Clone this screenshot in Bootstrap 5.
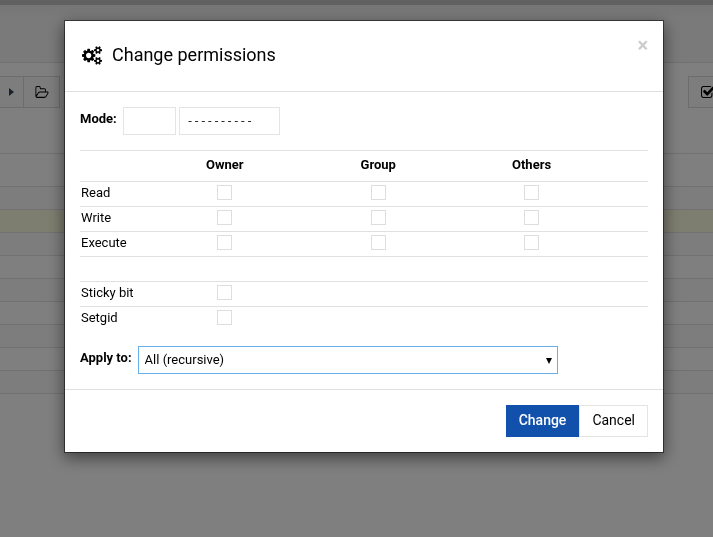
<!DOCTYPE html>
<html lang="en">
<head>
<meta charset="utf-8">
<meta name="viewport" content="width=device-width, initial-scale=1">
<title>Change permissions</title>
<link href="https://cdn.jsdelivr.net/npm/bootstrap@5.3.0/dist/css/bootstrap.min.css" rel="stylesheet">
<style>
body { font-family: Roboto, "Liberation Sans", sans-serif; font-size: 13px; line-height: 18px; color: #000; overflow: hidden; }
svg { display: block; fill: currentColor; }

/* File manager behind the dialog */
.app-strip { height: 5px; background: #c2c2c2; }
.app-head { height: 58px; background: linear-gradient(#ececec, #f4f4f4 12px); border-bottom: 1px solid #e2e2e2; }
.tool-row { padding: 13px 0 45px; }
.tool-btn { height: 32px; border: 1px solid #d8d8d8; border-radius: 0; background: #fafafa; color: #000; padding: 0 10px 0 11px; display: flex; align-items: center; }
.tool-crumb { width: 23px; border-left: 0; border-right: 0; padding: 0 9px; color: #345; }
.tool-check { width: 25px; border-right: 0; padding: 0 0 0 12px; overflow: hidden; }
.file-list { border-top: 1px solid #e2e2e2; }
.file-row { height: 23px; border-bottom: 1px solid #e2e2e2; }
.file-row.file-head { height: 33px; }
.file-row:nth-child(even) { background: #fbfbfb; }
.file-row.file-picked { background: #fafae0; }

/* Dialog */
.perm-modal { background: rgba(0, 0, 0, .5); padding-left: 15px; }
.perm-modal .modal-dialog { max-width: 600px; margin: 20px auto; }
.perm-modal .modal-content { border: 1px solid rgba(0, 0, 0, .5); border-radius: 0; background-clip: padding-box; box-shadow: 0 5px 15px rgba(0, 0, 0, .5); color: #000; }
.perm-modal .modal-header { padding: 15px; height: 71px; border-color: #e0e0e0; border-radius: 0; }
.perm-modal .modal-title { font-size: 18px; line-height: 24px; font-weight: 400; padding: 7px 0 0 2px; gap: 10px; }
.perm-close { border: 0; background: none; padding: 0; margin: 0; color: #ccc; font-size: 20px; line-height: 18px; font-weight: 700; }
.perm-modal .modal-body { padding: 15px; }
.perm-line { gap: 6px; }
.perm-pair { gap: 3px; }
.perm-label { font-weight: 700; margin: 0; line-height: 24px; }
.perm-modal .form-control, .perm-modal .form-select { font-size: 13px; line-height: 18px; height: 28px; padding: 4px 6px; border: 1px solid #e4e4e4; border-radius: 0; color: #000; }
.perm-modal .perm-octal { width: 53px; }
.perm-modal .perm-text { width: 101px; padding-left: 7px; font-family: "Liberation Mono", monospace; font-size: 11px; }
.perm-modal .form-select { width: 420px; border-color: #66afe9; background: #fff url("data:image/svg+xml,%3Csvg xmlns='http://www.w3.org/2000/svg' viewBox='0 0 6 6'%3E%3Cpath d='M0 0h6L3 6z'/%3E%3C/svg%3E") no-repeat right 5px top 11px / 6px 6px; }
.perm-table { width: 100%; table-layout: fixed; margin: 15px 0 14px; border-top: 1px solid #e0e0e0; }
.perm-table th, .perm-table td { height: 25px; padding: 0 1px 3px; border-bottom: 1px solid #e0e0e0; vertical-align: middle; text-align: center; line-height: 18px; }
.perm-table thead th { height: 31px; font-weight: 700; }
.perm-table tbody th { text-align: left; font-weight: 400; white-space: nowrap; }
.perm-table tbody tr:last-child > * { border-bottom: 0; }
.perm-modal .form-check-input { display: block; width: 15px; height: 15px; margin: 0 auto; padding: 0; border: 1px solid #dedede; border-radius: 0; float: none; }
.col-name { width: 12%; }
.col-who { width: 27%; }
.perm-modal .modal-footer { padding: 15px; border-color: #e0e0e0; border-radius: 0; }
.perm-modal .modal-footer > * { margin: 0; }
.perm-modal .btn { font-size: 14px; line-height: 20px; height: 32px; padding: 4px 12px 6px; border-radius: 0; border-color: #e4e4e4; color: #000; }
.perm-modal .btn-primary { background: #1150ab; border-color: #1150ab; color: #fff; font-weight: 500; }
</style>
</head>
<body>
<div aria-hidden="true">
  <div class="app-strip"></div>
  <div class="app-head"></div>
  <div class="tool-row d-flex justify-content-between">
    <div class="d-flex">
      <button class="tool-btn tool-crumb" type="button" tabindex="-1"><svg width="5" height="8" viewBox="0 0 5 8"><path d="M0 0l5 4-5 4z"/></svg></button>
      <button class="tool-btn" type="button" tabindex="-1"><svg width="14" height="13" viewBox="0 128 2048 1536" preserveAspectRatio="none"><path d="M1845 931q0-35-53-35h-1088q-40 0-85.5 21.5t-71.5 52.5l-294 363q-18 24-18 40 0 35 53 35h1088q40 0 86-22t71-53l294-363q18-22 18-39zm-1141-163h768v-160q0-40-28-68t-68-28h-576q-40 0-68-28t-28-68v-64q0-40-28-68t-68-28h-320q-40 0-68 28t-28 68v853l256-315q44-53 116-87.5t140-34.5zm1269 163q0 62-46 120l-295 363q-43 53-116 87.5t-140 34.5h-1088q-92 0-158-66t-66-158v-960q0-92 66-158t158-66h320q92 0 158 66t66 158v32h544q92 0 158 66t66 158v160h192q54 0 99 24.5t67 70.5q15 32 15 68z"/></svg></button>
    </div>
    <button class="tool-btn tool-check" type="button" tabindex="-1"><svg class="flex-shrink-0" width="13" height="12" viewBox="192 192 1600 1408" preserveAspectRatio="none"><path d="M1472 930v318q0 119-84.5 203.5t-203.5 84.5h-832q-119 0-203.5-84.5t-84.5-203.5v-832q0-119 84.5-203.5t203.5-84.5h832q63 0 117 25 15 7 18 23 3 17-9 29l-49 49q-10 10-23 10-3 0-9-2-23-6-45-6h-832q-66 0-113 47t-47 113v832q0 66 47 113t113 47h832q66 0 113-47t47-113v-254q0-13 9-22l64-64q10-10 23-10 6 0 12 3 20 8 20 29zm231-489l-814 814q-24 24-57 24t-57-24l-430-430q-24-24-24-57t24-57l110-110q24-24 57-24t57 24l263 263 647-647q24-24 57-24t57 24l110 110q24 24 24 57t-24 57z" transform="translate(128 64)"/></svg></button>
  </div>
  <div class="file-list">
    <div class="file-row file-head"></div>
    <div class="file-row"></div>
    <div class="file-row file-picked"></div>
    <div class="file-row"></div>
    <div class="file-row"></div>
    <div class="file-row"></div>
    <div class="file-row"></div>
    <div class="file-row"></div>
    <div class="file-row"></div>
    <div class="file-row"></div>
  </div>
</div>

<div class="modal perm-modal d-block" role="dialog" aria-modal="true" aria-labelledby="permTitle">
  <div class="modal-dialog">
    <form class="modal-content">
      <div class="modal-header align-items-start">
        <h4 class="modal-title d-flex align-items-center" id="permTitle">
          <svg width="20" height="19" viewBox="0 0 1920 1792"><path d="M896 896q0-106-75-181t-181-75-181 75-75 181 75 181 181 75 181-75 75-181zm768 512q0-52-38-90t-90-38-90 38-38 90q0 53 37.500 90.500t90.500 37.500 90.500-37.500 37.500-90.500zm0-1024q0-52-38-90t-90-38-90 38-38 90q0 53 37.500 90.500t90.500 37.500 90.500-37.500 37.500-90.500zm-384 421v185q0 10-7 19.500t-16 10.500l-155 24q-11 35-32 76 34 48 90 115 7 11 7 20 0 12-7 19-23 30-82.500 89.500t-78.500 59.500q-11 0-21-7l-115-90q-37 19-77 31-11 108-23 155-7 24-30 24h-186q-11 0-20-7.500t-10-17.500l-23-153q-34-10-75-31l-118 89q-7 7-20 7-11 0-21-8-144-133-144-160 0-9 7-19 10-14 41-53t47-61q-23-44-35-82l-152-24q-10-1-17-9.500t-7-19.500v-185q0-10 7-19.500t16-10.500l155-24q11-35 32-76-34-48-90-115-7-11-7-20 0-12 7-20 22-30 82-89t79-59q11 0 21 7l115 90q34-18 77-32 11-108 23-154 7-24 30-24h186q11 0 20 7.500t10 17.500l23 153q34 10 75 31l118-89q8-7 20-7 11 0 21 8 144 133 144 160 0 8-7 19-12 16-42 54t-45 60q23 48 34 82l152 23q10 2 17 10.500t7 19.500zm640 533v140q0 16-149 31-12 27-30 52 51 113 51 138 0 4-4 7-122 71-124 71-8 0-46-47t-52-68q-20 2-30 2t-30-2q-14 21-52 68t-46 47q-2 0-124-71-4-3-4-7 0-25 51-138-18-25-30-52-149-15-149-31v-140q0-16 149-31 13-29 30-52-51-113-51-138 0-4 4-7 4-2 35-20t59-34 30-16q8 0 46 46.500t52 67.500q20-2 30-2t30 2q51-71 92-112l6-2q4 0 124 70 4 3 4 7 0 25-51 138 17 23 30 52 149 15 149 31zm0-1024v140q0 16-149 31-12 27-30 52 51 113 51 138 0 4-4 7-122 71-124 71-8 0-46-47t-52-68q-20 2-30 2t-30-2q-14 21-52 68t-46 47q-2 0-124-71-4-3-4-7 0-25 51-138-18-25-30-52-149-15-149-31v-140q0-16 149-31 13-29 30-52-51-113-51-138 0-4 4-7 4-2 35-20t59-34 30-16q8 0 46 46.500t52 67.500q20-2 30-2t30 2q51-71 92-112l6-2q4 0 124 70 4 3 4 7 0 25-51 138 17 23 30 52 149 15 149 31z"/></svg>
          Change permissions
        </h4>
        <button class="perm-close ms-auto" type="button" aria-label="Close">×</button>
      </div>
      <div class="modal-body">
        <div class="perm-line d-flex">
          <label class="perm-label" for="octal">Mode:</label>
          <div class="perm-pair d-flex">
            <input class="form-control perm-octal" id="octal" type="text">
            <input class="form-control perm-text" id="symbolic" type="text" value="----------" aria-label="Symbolic mode">
          </div>
        </div>
        <table class="perm-table">
          <colgroup><col class="col-name"><col class="col-who"><col class="col-who"><col class="col-who"><col></colgroup>
          <thead>
            <tr><td></td><th scope="col">Owner</th><th scope="col">Group</th><th scope="col">Others</th><td></td></tr>
          </thead>
          <tbody>
            <tr><th scope="row">Read</th>
              <td><input class="form-check-input" type="checkbox" aria-label="Owner read"></td>
              <td><input class="form-check-input" type="checkbox" aria-label="Group read"></td>
              <td><input class="form-check-input" type="checkbox" aria-label="Others read"></td><td></td></tr>
            <tr><th scope="row">Write</th>
              <td><input class="form-check-input" type="checkbox" aria-label="Owner write"></td>
              <td><input class="form-check-input" type="checkbox" aria-label="Group write"></td>
              <td><input class="form-check-input" type="checkbox" aria-label="Others write"></td><td></td></tr>
            <tr><th scope="row">Execute</th>
              <td><input class="form-check-input" type="checkbox" aria-label="Owner execute"></td>
              <td><input class="form-check-input" type="checkbox" aria-label="Group execute"></td>
              <td><input class="form-check-input" type="checkbox" aria-label="Others execute"></td><td></td></tr>
            <tr><td colspan="5"></td></tr>
            <tr><th scope="row"><label for="sticky">Sticky bit</label></th>
              <td><input class="form-check-input" type="checkbox" id="sticky"></td><td></td><td></td><td></td></tr>
            <tr><th scope="row"><label for="setgid">Setgid</label></th>
              <td><input class="form-check-input" type="checkbox" id="setgid"></td><td></td><td></td><td></td></tr>
          </tbody>
        </table>
        <div class="perm-line d-flex">
          <label class="perm-label" for="applyTo">Apply to:</label>
          <select class="form-select" id="applyTo">
            <option>All (recursive)</option>
          </select>
        </div>
      </div>
      <div class="modal-footer">
        <button class="btn btn-primary" type="submit">Change</button>
        <button class="btn" type="button">Cancel</button>
      </div>
    </form>
  </div>
</div>
<script src="https://cdn.jsdelivr.net/npm/bootstrap@5.3.0/dist/js/bootstrap.bundle.min.js"></script>
</body>
</html>
